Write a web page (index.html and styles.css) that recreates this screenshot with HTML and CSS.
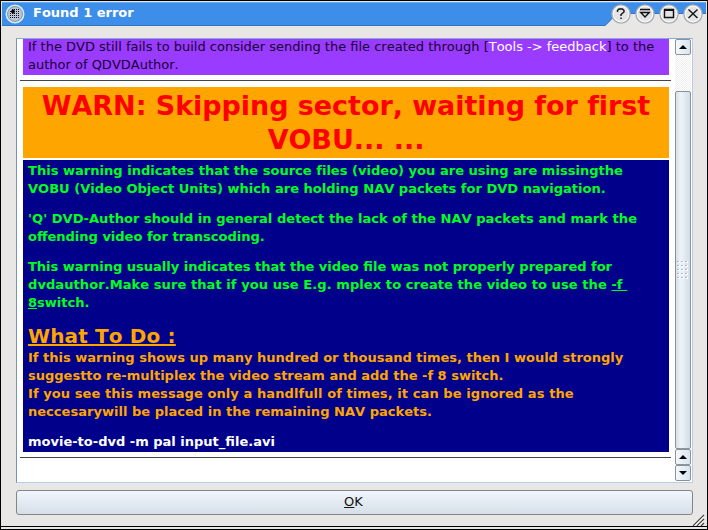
FILE: index.html
```
<!DOCTYPE html>
<html lang="en">
<head>
<meta charset="utf-8">
<title>Found 1 error</title>
<link rel="stylesheet" href="styles.css">
</head>
<body>
<div class="window">
  <header class="titlebar">
    <svg class="titleshape" width="704" height="24" viewBox="0 0 704 24">
      <path d="M0 0H704V11H619C615 11 612 15 609 18L603 24H0Z" fill="#3c8ee8"/>
      <path d="M0 .5H704" stroke="#68aaf0"/>
      <path d="M0 23.5H603L609 17.5C612 14.5 615 11.5 619 11.5H704" fill="none" stroke="#3275c4"/>
    </svg>
    <svg class="app-icon" width="20" height="20" viewBox="0 0 20 20">
      <circle cx="10" cy="10" r="8.7" fill="#b9c7d6" stroke="#d8eafa" stroke-width="1.6"/>
      <circle cx="10" cy="10" r="7.4" fill="none" stroke="#8098b0"/>
      <path d="M7 5.5H15M5 7.5H15M5 9.5H15M5 11.5H15M5 13.5H15" stroke="#111" stroke-dasharray="1 1"/>
      <path d="M6 7.5H10M8 5.5V9.5" stroke="#000" stroke-width="2"/>
    </svg>
    <h1 class="title">Found 1 error</h1>
    <div class="controls">
      <svg width="20" height="20" viewBox="0 0 20 20"><circle class="ring" cx="10" cy="10" r="9"/><circle class="inner" cx="10" cy="10" r="7.8"/><path class="glyph" d="M6.5 8V6.5L8 5H11.5L13 6.5V8L10 10.5V12M10 13.5V15"/></svg>
      <svg width="20" height="20" viewBox="0 0 20 20"><circle class="ring" cx="10" cy="10" r="9"/><circle class="inner" cx="10" cy="10" r="7.8"/><path class="glyph" d="M5 5.5H15M5.7 8.5H14.3L10 13Z"/></svg>
      <svg width="20" height="20" viewBox="0 0 20 20"><circle class="ring" cx="10" cy="10" r="9"/><circle class="inner" cx="10" cy="10" r="7.8"/><path class="glyph" d="M5.5 5.5H14.5V13.5H5.5ZM5 6.2H15"/></svg>
      <svg width="20" height="20" viewBox="0 0 20 20"><circle class="ring" cx="10" cy="10" r="9"/><circle class="inner" cx="10" cy="10" r="7.8"/><path class="glyph" d="M5.5 5.5L14.5 14M14.5 5.5L5.5 14"/></svg>
    </div>
  </header>
  <main class="browser">
    <div class="document">
      <p class="tip"><span>If the DVD still fails to build consider sending the file created through [<a>Tools -&gt; feedback</a>] to the<br>author of QDVDAuthor.</span></p>
      <div class="rule"></div>
      <h2 class="warning">WARN: Skipping sector, waiting for first<br>VOBU... ...</h2>
      <section class="details">
        <p class="loose">This warning indicates that the source files (video) you are using are missingthe<br>VOBU (Video Object Units) which are holding NAV packets for DVD navigation.</p>
        <p><span class="looser">'Q' DVD-Author should in general detect the lack of the NAV packets and mark the</span><br>offending video for transcoding.</p>
        <p>This warning usually indicates that the video file was not properly prepared for<br><span class="loosest">dvdauthor.Make sure that if you use E.g. mplex to create the video to use the <u>-f&nbsp;</u></span><br><u>8</u>switch.</p>
        <h3>What To Do :</h3>
        <p class="advice">If this warning shows up many hundred or thousand times, then I would strongly<br>suggestto re-multiplex the video stream and add the -f 8 switch.<br><span class="loosest">If you see this message only a handlfull of times, it can be ignored as the</span><br><span class="loose">neccesarywill be placed in the remaining NAV packets.</span></p>
        <p class="command">movie-to-dvd -m pal input_file.avi</p>
      </section>
      <div class="rule"></div>
    </div>
    <div class="scrollbar">
      <div class="step"><svg width="8" height="4"><path d="M0 4L4 0L8 4Z"/></svg></div>
      <div class="track"></div>
      <div class="thumb"><svg width="12" height="20"><g stroke-dasharray="2 2" stroke-width="2"><path d="M1 2H12M1 6H12M1 10H12M1 14H12M1 18H12" stroke="#fff"/><path d="M0 1.5H11M0 5.5H11M0 9.5H11M0 13.5H11M0 17.5H11" stroke="#aeb9c3" stroke-width="1"/></g></svg></div>
      <div class="step"><svg width="8" height="4"><path d="M0 4L4 0L8 4Z"/></svg></div>
      <div class="step"><svg width="8" height="4"><path d="M0 0H8L4 4Z"/></svg></div>
    </div>
  </main>
  <button class="ok"><span><u>O</u>K</span></button>
  <svg class="grip" width="13" height="12" viewBox="0 0 13 12"><path d="M1 12L12 1M5 12L12 5M9 12L12 9" stroke="#444" stroke-width="1.3"/><path d="M2.5 12L12 2.5M6.5 12L12 6.5" stroke="#fff"/></svg>
</div>
</body>
</html>
```
FILE: styles.css
```
* { box-sizing: border-box; }
body { margin: 0; width: 708px; height: 530px; overflow: hidden; background: #000; font: 13px/18px "DejaVu Sans", sans-serif; font-kerning: none; color: #000; }
h1, h2, h3, p { margin: 0; }
.window { position: relative; display: flex; flex-direction: column; width: 706px; height: 528px; margin: 1px; background: #e9e7e6; border-bottom: 1px solid #e9e7e6; }
.window::after { content: ""; position: absolute; left: 0; right: 0; bottom: 1px; height: 1px; background: #000; }
.titlebar { position: relative; display: flex; align-items: flex-start; height: 37px; flex: none; padding-left: 4px; }
.titleshape { position: absolute; left: 0; top: 1px; width: 706px; }
.app-icon { position: relative; margin-top: 3px; }
.title { position: relative; margin: 3px 0 0 8px; font-size: 13px; line-height: 18px; color: #fff; white-space: nowrap; }
.controls { position: relative; display: flex; gap: 4px; margin: 3px 4px 0 auto; }
.ring { fill: #e8e6e6; stroke: #a6acb3; stroke-width: 1.5; }
.inner { fill: #e5e4e4; stroke: #f7f7f8; stroke-width: 1.2; }
.glyph { fill: none; stroke: #111; stroke-width: 1.4; }
.browser { display: flex; flex: none; width: 677px; height: 445px; margin-left: 15px; border: 1px solid #b5cfe9; border-left-color: #7594b3; border-top-color: #8aacd0; background: #fff; }
.document { width: 651px; flex: none; margin-left: 3px; overflow: hidden; white-space: nowrap; }
.tip { display: flow-root; height: 36px; margin: 0 2px 5px 3px; padding: 0 5px; background: #9a3cff; color: #180032; line-height: 18px; }
.tip span { display: block; margin-top: -1px; }
.tip a { color: #fff; }
.rule { height: 1px; background: #444; }
.warning { height: 71px; margin: 6px 2px 2px 3px; padding-top: 2px; background: #ffa500; color: #f00; text-align: center; font-size: 27px; line-height: 34px; letter-spacing: -.05px; }
.details { height: 292px; margin: 0 2px 5px 3px; padding: 2px 5px; background: #00008b; color: #00ff20; font-weight: bold; }
.details p { margin-bottom: 12px; }
.loose { letter-spacing: .025px; }
.looser { letter-spacing: .05px; }
.loosest { letter-spacing: .08px; }
.details h3 { margin: 12px 0 1px; color: #ffa500; font-size: 20px; line-height: 24px; letter-spacing: .15px; text-decoration: underline; }
.details .advice { color: #ffa500; }
.details .command { color: #fff; }
.scrollbar { display: flex; flex-direction: column; width: 16px; margin: 0 1px 0 auto; }
.step, .thumb { display: flex; align-items: center; justify-content: center; flex: none; width: 16px; border: 1px solid #8b9299; border-radius: 2px; background: linear-gradient(90deg, #f5f8fc, #d9e3ee); }
.step { height: 16px; }
.track { height: 36px; background: repeating-conic-gradient(#eee 0 25%, #fff 0 50%) 0 0 / 2px 2px; }
.thumb { height: 358px; background: linear-gradient(90deg, #d7e0e8, #eef4f9 35%, #d2dde7); }
.ok { display: flex; align-items: center; justify-content: center; width: 677px; height: 25px; margin: 7px 0 0 15px; padding: 0 2px 1px 0; border: 1px solid #858585; border-radius: 3px; background: linear-gradient(#f0f6fd, #d6dfe8); color: #111; font: 13px/18px "DejaVu Sans", sans-serif; font-kerning: none; flex: none; }
.grip { position: absolute; right: 2px; bottom: 2px; }
```
